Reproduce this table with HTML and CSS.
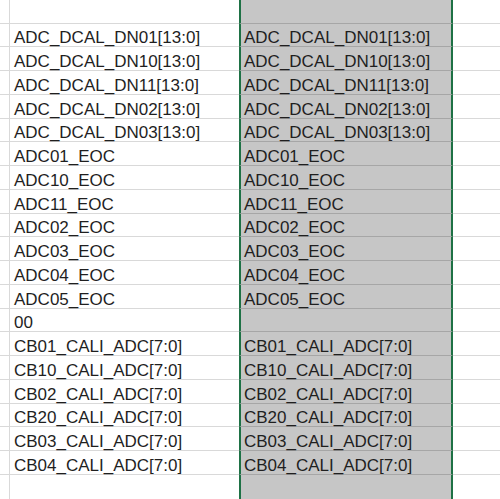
FILE: index.html
```html
<!DOCTYPE html>
<html>
<head>
<meta charset="utf-8">
<link rel="stylesheet" href="styles.css">
</head>
<body>
<div class="sheet">
  <div class="row first"><div class="c0"></div><div class="ca"></div><div class="cb"></div><div class="cc"></div></div>
  <div class="row"><div class="c0"></div><div class="ca">ADC_DCAL_DN01[13:0]</div><div class="cb">ADC_DCAL_DN01[13:0]</div><div class="cc"></div></div>
  <div class="row"><div class="c0"></div><div class="ca">ADC_DCAL_DN10[13:0]</div><div class="cb">ADC_DCAL_DN10[13:0]</div><div class="cc"></div></div>
  <div class="row"><div class="c0"></div><div class="ca">ADC_DCAL_DN11[13:0]</div><div class="cb">ADC_DCAL_DN11[13:0]</div><div class="cc"></div></div>
  <div class="row"><div class="c0"></div><div class="ca">ADC_DCAL_DN02[13:0]</div><div class="cb">ADC_DCAL_DN02[13:0]</div><div class="cc"></div></div>
  <div class="row"><div class="c0"></div><div class="ca">ADC_DCAL_DN03[13:0]</div><div class="cb">ADC_DCAL_DN03[13:0]</div><div class="cc"></div></div>
  <div class="row"><div class="c0"></div><div class="ca">ADC01_EOC</div><div class="cb">ADC01_EOC</div><div class="cc"></div></div>
  <div class="row"><div class="c0"></div><div class="ca">ADC10_EOC</div><div class="cb">ADC10_EOC</div><div class="cc"></div></div>
  <div class="row"><div class="c0"></div><div class="ca">ADC11_EOC</div><div class="cb">ADC11_EOC</div><div class="cc"></div></div>
  <div class="row"><div class="c0"></div><div class="ca">ADC02_EOC</div><div class="cb">ADC02_EOC</div><div class="cc"></div></div>
  <div class="row"><div class="c0"></div><div class="ca">ADC03_EOC</div><div class="cb">ADC03_EOC</div><div class="cc"></div></div>
  <div class="row"><div class="c0"></div><div class="ca">ADC04_EOC</div><div class="cb">ADC04_EOC</div><div class="cc"></div></div>
  <div class="row"><div class="c0"></div><div class="ca">ADC05_EOC</div><div class="cb">ADC05_EOC</div><div class="cc"></div></div>
  <div class="row"><div class="c0"></div><div class="ca">00</div><div class="cb"></div><div class="cc"></div></div>
  <div class="row"><div class="c0"></div><div class="ca">CB01_CALI_ADC[7:0]</div><div class="cb">CB01_CALI_ADC[7:0]</div><div class="cc"></div></div>
  <div class="row"><div class="c0"></div><div class="ca">CB10_CALI_ADC[7:0]</div><div class="cb">CB10_CALI_ADC[7:0]</div><div class="cc"></div></div>
  <div class="row"><div class="c0"></div><div class="ca">CB02_CALI_ADC[7:0]</div><div class="cb">CB02_CALI_ADC[7:0]</div><div class="cc"></div></div>
  <div class="row"><div class="c0"></div><div class="ca">CB20_CALI_ADC[7:0]</div><div class="cb">CB20_CALI_ADC[7:0]</div><div class="cc"></div></div>
  <div class="row"><div class="c0"></div><div class="ca">CB03_CALI_ADC[7:0]</div><div class="cb">CB03_CALI_ADC[7:0]</div><div class="cc"></div></div>
  <div class="row"><div class="c0"></div><div class="ca">CB04_CALI_ADC[7:0]</div><div class="cb">CB04_CALI_ADC[7:0]</div><div class="cc"></div></div>
  <div class="row last"><div class="c0"></div><div class="ca"></div><div class="cb"></div><div class="cc"></div></div>
</div>
</body>
</html>
```

FILE: styles.css
```css
html, body {
  margin: 0;
  padding: 0;
  background: #ffffff;
}
body {
  width: 500px;
  height: 499px;
  overflow: hidden;
}
.sheet {
  display: flex;
  flex-direction: column;
  font-family: "Liberation Sans", Arial, sans-serif;
  font-size: 17px;
  color: #1f1f1f;
}
.row {
  display: grid;
  grid-template-columns: 10px 229px 214px 1fr;
  height: 23.75px;
  box-sizing: border-box;
}
.row.first {
  height: 23.5px;
}
.row.last {
  height: 30px;
}
.row > div {
  border-bottom: 1px solid #d9d9d9;
  box-sizing: border-box;
  display: flex;
  align-items: flex-end;
  white-space: nowrap;
  line-height: 16px;
  padding-bottom: 0;
}
.row.last > div {
  border-bottom: none;
}
.c0 {
  border-right: 1px solid #d9d9d9;
}
.ca {
  padding-left: 4px;
}
.row > .cb {
  background: #c6c6c6;
  border-left: 2px solid #1e7145;
  border-right: 2px solid #1e7145;
  border-bottom: 1px solid #a6a6a6;
  padding-left: 3px;
}
.row.last > .cb {
  border-bottom: none;
}
```
